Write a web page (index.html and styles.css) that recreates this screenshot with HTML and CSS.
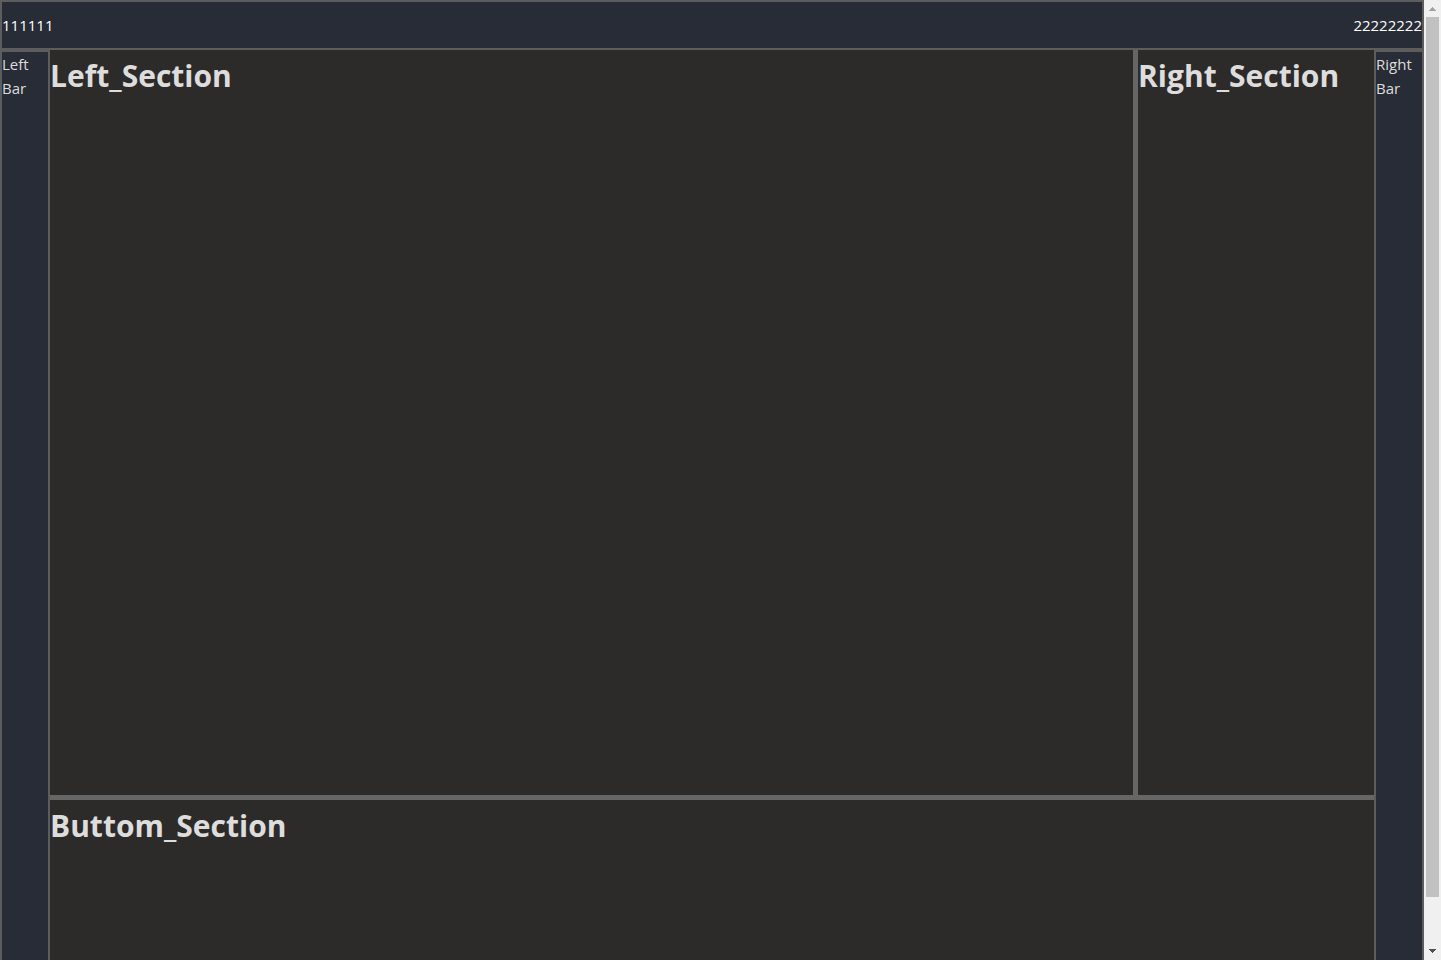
FILE: index.html
```html
<!DOCTYPE html>
<html lang="en">
<head>
<meta charset="utf-8">
<title>Sections</title>
<link rel="stylesheet" href="styles.css">
</head>
<body>
<div class="window">
  <div class="app">
    <header class="topbar"><span>111111</span><span>22222222</span></header>
    <div class="body">
      <aside class="sidebar">Left Bar</aside>
      <main class="panes">
        <div class="upper">
          <section class="pane pane-left"><h1>Left_Section</h1></section>
          <section class="pane pane-right"><h1>Right_Section</h1></section>
        </div>
        <section class="pane pane-bottom"><h1>Buttom_Section</h1></section>
      </main>
      <aside class="sidebar">Right Bar</aside>
    </div>
  </div>
  <div class="scrollbar" aria-hidden="true">
    <svg class="arrow" viewBox="0 0 17 17" shape-rendering="crispEdges"><path fill="#a3a3a3" d="M8 7h1v1h1v1h1v1h1v1H5v-1h1V9h1V8h1z"/></svg>
    <div class="track"><div class="thumb"></div></div>
    <svg class="arrow" viewBox="0 0 17 17" shape-rendering="crispEdges"><path fill="#505050" d="M5 6h7v1h-1v1h-1v1H9v1H8V9H7V8H6V7H5z"/></svg>
  </div>
</div>
</body>
</html>
```
FILE: styles.css
```css
* {
  box-sizing: border-box;
}

body {
  margin: 0;
  background: #2d2b29;
  color: #dddddd;
  font: 15px/24px "Open Sans", "Noto Sans", sans-serif;
}

.window {
  display: flex;
  height: 100vh;
}

.app {
  flex: 1;
  min-width: 0;
  display: flex;
  flex-direction: column;
}

.topbar {
  display: flex;
  justify-content: space-between;
  align-items: center;
  height: 50px;
  border: 2px solid #5d5d5d;
  background: #272c36;
  color: #ffffff;
}

.body {
  flex: 1;
  min-height: 0;
  display: flex;
}

.sidebar {
  flex: none;
  width: 50px;
  border: 2px solid #5d5d5d;
  border-bottom: 0;
  background: #272c36;
}

.panes {
  flex: 1;
  min-width: 0;
  display: flex;
  flex-direction: column;
}

.upper {
  flex: 1;
  display: flex;
  border-bottom: 5px solid #666666;
}

.pane-left {
  flex: 1;
  border-right: 5px solid #666666;
}

.pane-right {
  width: 236px;
}

.pane-bottom {
  height: 160px;
}

h1 {
  margin: 0;
  padding: 6px 0;
  font-size: 30px;
  line-height: 40px;
  font-weight: 700;
}

.scrollbar {
  flex: none;
  width: 17px;
  display: flex;
  flex-direction: column;
  background: #f0f0f0;
}

.arrow {
  flex: none;
  display: block;
  width: 17px;
  height: 17px;
}

.track {
  flex: 1;
  padding: 0 2px;
}

.thumb {
  height: 95%;
  background: #c1c1c1;
}
```
